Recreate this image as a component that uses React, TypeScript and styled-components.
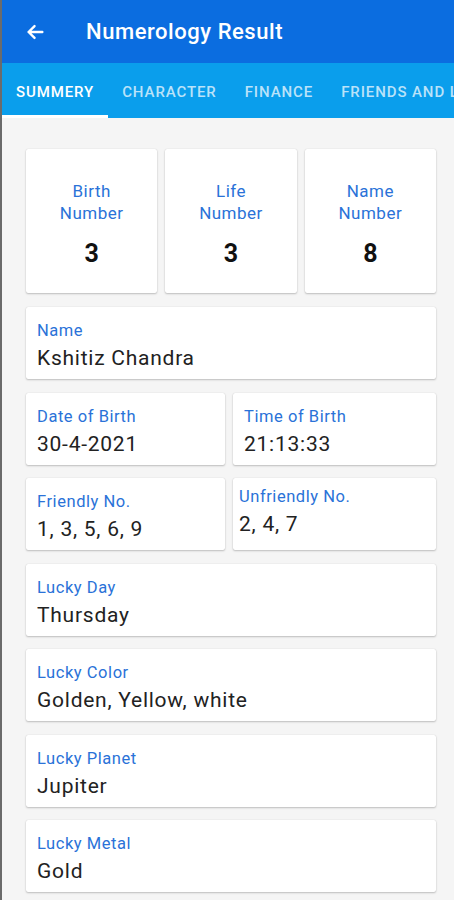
import styled, {createGlobalStyle} from 'styled-components';

const GlobalStyle = createGlobalStyle`
	html, body {
		margin: 0;
		padding: 0;
		background: #f5f5f5;
		font-family: Roboto, "Noto Sans", Arial, sans-serif;
	}
	* {
		box-sizing: border-box;
	}
`;

interface NumberItem {
	title: string[];
	value: string;
}

interface InfoItem {
	label: string;
	value: string;
	tight?: boolean;
}

const topNumbers: NumberItem[] = [
	{title: ['Birth', 'Number'], value: '3'},
	{title: ['Life', 'Number'], value: '3'},
	{title: ['Name', 'Number'], value: '8'},
];

const tabs = ['Summery', 'Character', 'Finance', 'Friends and Love'];

function BackArrow() {
	return (
		<svg width="22" height="22" viewBox="0 0 24 24" fill="none">
			<path
				d="M20 12H5M11.5 5.5L5 12l6.5 6.5"
				stroke="#fff"
				strokeWidth="2.6"
				strokeLinecap="round"
				strokeLinejoin="round"
			/>
		</svg>
	);
}

function InfoCard({label, value, tight}: InfoItem) {
	return (
		<Card $tight={tight}>
			<Label>{label}</Label>
			<Value>{value}</Value>
		</Card>
	);
}

function App() {
	return (
		<>
			<GlobalStyle />
			<Page>
				<AppBar>
					<BackArrow />
					<Title>Numerology Result</Title>
				</AppBar>
				<TabBar>
					{tabs.map((tab, i) => (
						<Tab key={tab} $active={i === 0}>
							{tab}
						</Tab>
					))}
				</TabBar>
				<Content>
					<TopRow>
						{topNumbers.map((item) => (
							<NumberCard key={item.title.join(' ')}>
								<NumberTitle>
									{item.title[0]}
									<br />
									{item.title[1]}
								</NumberTitle>
								<BigNumber>{item.value}</BigNumber>
							</NumberCard>
						))}
					</TopRow>
					<InfoCard label="Name" value="Kshitiz Chandra" />
					<TwoCol>
						<InfoCard label="Date of Birth" value="30-4-2021" />
						<InfoCard label="Time of Birth" value="21:13:33" />
					</TwoCol>
					<TwoCol>
						<InfoCard label="Friendly No." value="1, 3, 5, 6, 9" />
						<InfoCard label="Unfriendly No." value="2, 4, 7" tight />
					</TwoCol>
					<InfoCard label="Lucky Day" value="Thursday" />
					<InfoCard label="Lucky Color" value="Golden, Yellow, white" />
					<InfoCard label="Lucky Planet" value="Jupiter" />
					<InfoCard label="Lucky Metal" value="Gold" />
				</Content>
			</Page>
		</>
	);
}
export default App;

const Page = styled.div`
	width: 454px;
	min-height: 900px;
	background: #f5f5f5;
	border-left: 2px solid #6b6b6b;
	overflow: hidden;
`;

const AppBar = styled.div`
	height: 63px;
	background: #0b6de0;
	display: flex;
	align-items: center;
	padding-left: 22px;
	gap: 40px;
`;

const Title = styled.div`
	color: #fff;
	font-size: 22px;
	font-weight: 500;
	letter-spacing: 0.55px;
`;

const TabBar = styled.div`
	height: 55px;
	background: #0a9eec;
	display: flex;
	white-space: nowrap;
`;

const Tab = styled.div<{$active?: boolean}>`
	padding: 6px 14px 0;
	display: flex;
	align-items: center;
	text-transform: uppercase;
	font-size: 15px;
	font-weight: 500;
	letter-spacing: 0.9px;
	color: ${(p) => (p.$active ? '#ffffff' : 'rgba(255, 255, 255, 0.72)')};
	border-bottom: 3px solid ${(p) => (p.$active ? '#ffffff' : 'transparent')};
`;

const Content = styled.div`
	padding: 31px 18px 0 24px;
	display: flex;
	flex-direction: column;
	gap: 13.5px;
`;

const TopRow = styled.div`
	display: grid;
	grid-template-columns: repeat(3, 1fr);
	gap: 8px;
	margin-bottom: 0.5px;
`;

const CardBase = styled.div`
	background: #fff;
	border-radius: 2px;
	box-shadow: 0 1px 2px rgba(0, 0, 0, 0.22), 0 0 1px rgba(0, 0, 0, 0.18);
`;

const NumberCard = styled(CardBase)`
	height: 144px;
	display: flex;
	flex-direction: column;
	align-items: center;
	padding-top: 31px;
`;

const NumberTitle = styled.div`
	color: #2a72d8;
	font-size: 17px;
	line-height: 22px;
	letter-spacing: 0.5px;
	text-align: center;
`;

const BigNumber = styled.div`
	margin-top: 15px;
	font-size: 25px;
	font-weight: 700;
	color: #111;
`;

const TwoCol = styled.div`
	display: grid;
	grid-template-columns: 199px 1fr;
	gap: 8px;
`;

const Card = styled(CardBase)<{$tight?: boolean}>`
	height: 72px;
	padding: ${(p) => (p.$tight ? '8px 6px' : '13px 12px 0 11px')};
	display: flex;
	flex-direction: column;
`;

const Label = styled.div`
	color: #2a72d8;
	font-size: 16.5px;
	line-height: 22px;
	letter-spacing: 0.55px;
`;

const Value = styled.div`
	color: #222;
	font-size: 21px;
	line-height: 28px;
	letter-spacing: 0.75px;
	margin-top: 2px;
`;
